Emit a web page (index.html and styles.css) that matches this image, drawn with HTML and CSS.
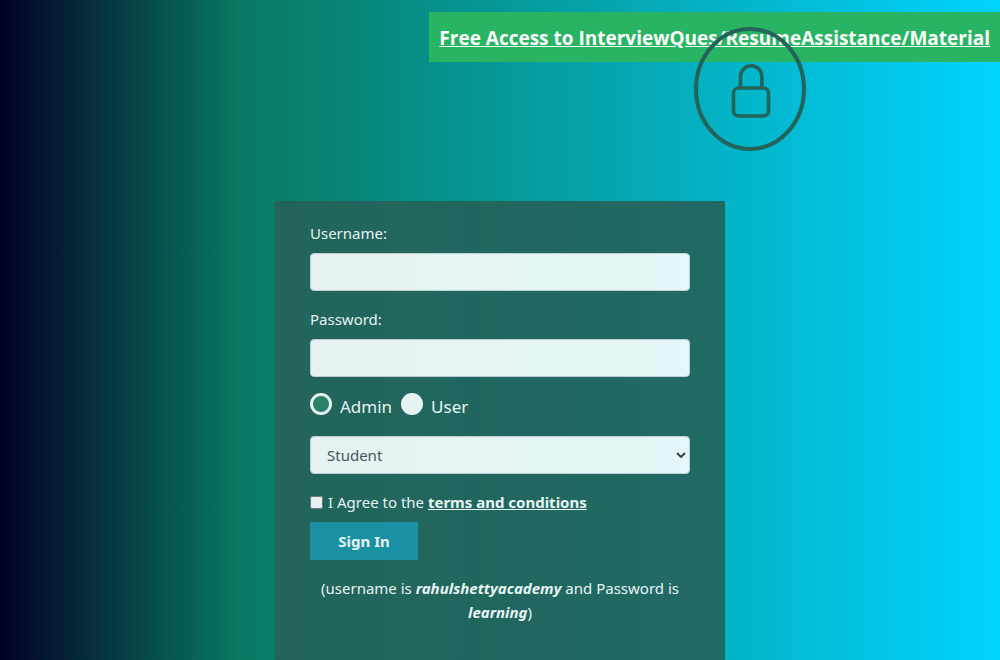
FILE: index.html
```html
<!DOCTYPE html>
<html lang="en">
<head>
<meta charset="utf-8">
<meta name="viewport" content="width=device-width, initial-scale=1">
<title>Login</title>
<link rel="stylesheet" href="styles.css">
</head>
<body class="page">
<header class="top">
  <a class="banner" href="#">Free Access to InterviewQues/ResumeAssistance/Material</a>
  <svg class="lock" viewBox="0 0 112 124" aria-hidden="true">
    <ellipse cx="56" cy="62" rx="54" ry="60" stroke-width="4"/>
    <rect x="39.5" y="61" width="35" height="28" rx="5" stroke-width="3.6"/>
    <path d="M46.5 61V49.5a10.7 10.7 0 0 1 21.4 0V61" stroke-width="3.6"/>
  </svg>
</header>
<main class="main">
  <form class="card">
    <div class="field">
      <label class="label" for="username">Username:</label>
      <input class="control" id="username" type="text">
    </div>
    <div class="field">
      <label class="label" for="password">Password:</label>
      <input class="control" id="password" type="password">
    </div>
    <div class="roles">
      <label class="role"><input class="radio" type="radio" name="role" checked><span>Admin</span></label>
      <label class="role"><input class="radio" type="radio" name="role"><span>User</span></label>
    </div>
    <div class="select-wrap">
      <select class="control select" aria-label="Occupation">
        <option>Student</option>
        <option>Teacher</option>
        <option>Consultant</option>
      </select>
      <svg class="chevron" viewBox="0 0 10 6" aria-hidden="true"><path d="M1 1l4 4 4-4"/></svg>
    </div>
    <div class="terms">
      <input class="check" id="terms" type="checkbox">
      <label for="terms">I Agree to the <a class="terms-link" href="#">terms and conditions</a></label>
    </div>
    <button class="submit" type="button">Sign In</button>
    <p class="hint">(username is <b><i>rahulshettyacademy</i></b> and Password is <b><i>learning</i></b>)</p>
  </form>
</main>
</body>
</html>
```
FILE: styles.css
```css
* {
  box-sizing: border-box;
}

.page {
  margin: 0;
  min-height: 100vh;
  display: flex;
  flex-direction: column;
  font-family: "Noto Sans", "Open Sans", sans-serif;
  font-size: 15px;
  line-height: 24px;
  color: #fff;
  background: linear-gradient(90deg, #020024 0%, #097961 24%, #00d4ff 100%);
}

.top {
  position: relative;
  display: flex;
  justify-content: flex-end;
  padding-top: 12px;
}

.banner {
  padding: 11px 10px 9px;
  background: #28b463;
  color: #fff;
  font-family: "Open Sans", "Noto Sans", sans-serif;
  font-size: 19px;
  font-weight: 700;
  line-height: 30px;
  white-space: nowrap;
}

.lock {
  position: absolute;
  top: 27px;
  left: 75%;
  width: 112px;
  height: 124px;
  margin-left: -56px;
  fill: none;
  stroke: #23635a;
}

.main {
  flex: 1;
  display: flex;
  justify-content: center;
  margin-top: 139px;
}

.card {
  width: 100%;
  max-width: 450px;
  padding: 20px 35px;
  background: #256259;
  opacity: 0.9;
}

.field {
  margin-bottom: 16px;
}

.label {
  display: block;
  margin-bottom: 8px;
}

.control {
  display: block;
  width: 100%;
  height: 38px;
  padding: 6px 12px;
  border: 1px solid #ced4da;
  border-radius: 4px;
  background: #fff;
  color: #495057;
  font: inherit;
}

.roles {
  display: flex;
  gap: 9px;
  margin-bottom: 16px;
}

.role {
  display: flex;
  gap: 8px;
  font-size: 17px;
  line-height: 27px;
}

.radio {
  appearance: none;
  width: 22px;
  height: 22px;
  margin: 0;
  border: 3px solid #fff;
  border-radius: 50%;
  background: #fff;
}

.radio:checked {
  background: #2b8366;
}

.select-wrap {
  position: relative;
  margin-bottom: 16px;
}

.select {
  appearance: none;
  padding-left: 16px;
}

.chevron {
  position: absolute;
  top: 16px;
  right: 4px;
  width: 10px;
  height: 6px;
  fill: none;
  stroke: #343a40;
  stroke-width: 2;
  pointer-events: none;
}

.terms {
  display: flex;
  align-items: center;
  gap: 5px;
  margin-bottom: 8px;
}

.check {
  width: 13px;
  height: 13px;
  margin: 0;
}

.terms-link {
  color: #fff;
  font-weight: 700;
}

.submit {
  display: block;
  width: 108px;
  height: 38px;
  border: 0;
  background: #1d92a8;
  color: #fff;
  font: inherit;
  font-weight: 700;
}

.hint {
  margin: 16px 0 0;
  text-align: center;
}
```
